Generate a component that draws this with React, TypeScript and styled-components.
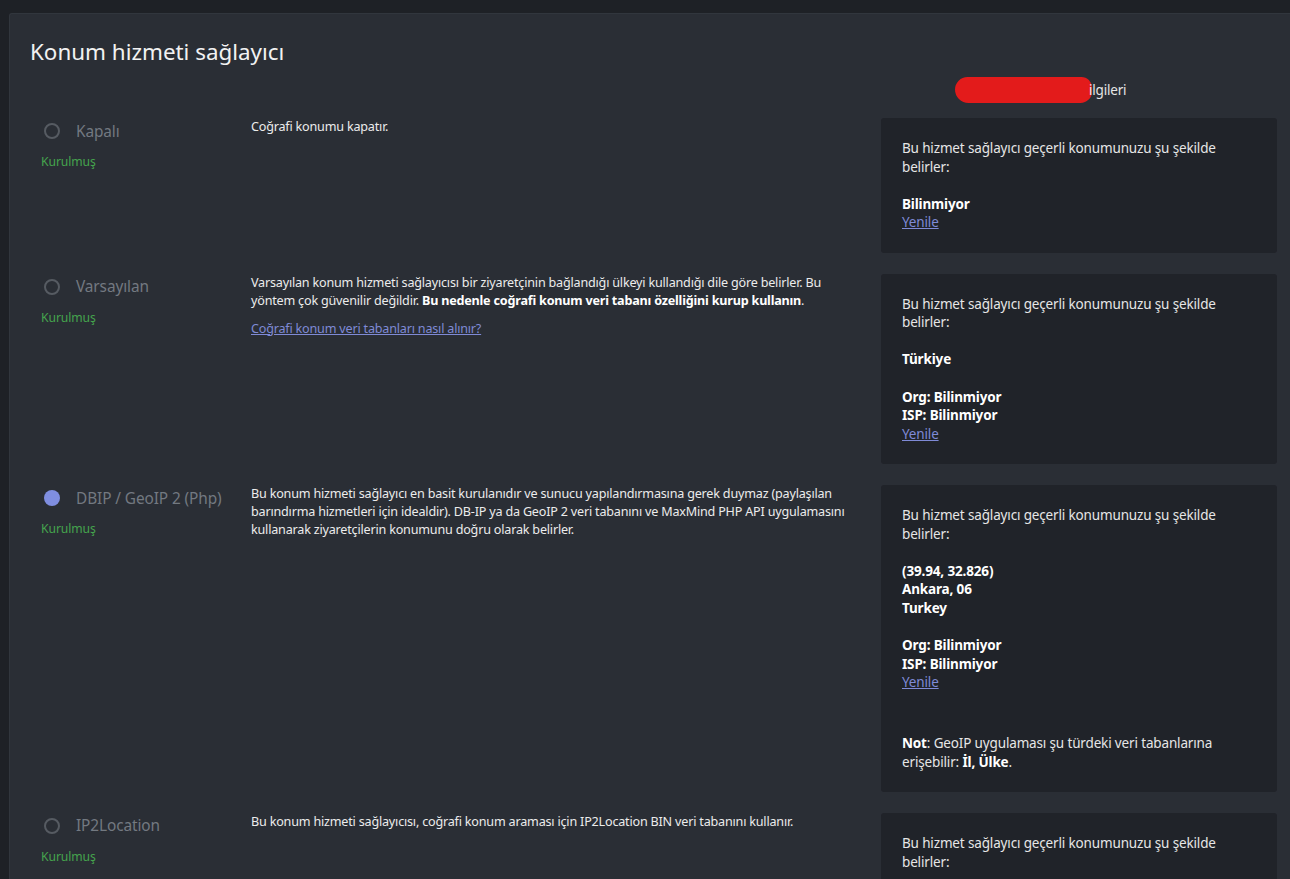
import React from "react";
import styled, { createGlobalStyle } from "styled-components";

const Global = createGlobalStyle`
  html, body { margin: 0; padding: 0; background: #1e2126; }
  body { font-family: "Noto Sans", "Open Sans", sans-serif; overflow: hidden; }
  * { box-sizing: border-box; }
`;

const Page = styled.div`
  padding: 13px 0 0 9px;
  min-height: 879px;
`;

const Panel = styled.section`
  background: #2a2e35;
  border-top: 1px solid #31363d;
  border-left: 1px solid #31363d;
  border-top-left-radius: 3px;
  padding: 22px 13px 40px 20px;
  min-height: 866px;
`;

const Title = styled.h2`
  margin: 0;
  font-size: 22.4px;
  line-height: 32px;
  font-weight: 400;
  color: #f2f2f2;
`;

const HeaderRow = styled.div`
  display: grid;
  grid-template-columns: 1fr 396px;
  margin-top: 9px;
  height: 26px;
`;

const HeaderCell = styled.div`
  grid-column: 2;
  display: flex;
  align-items: center;
  padding-left: 74px;
  font-size: 13.5px;
  letter-spacing: -0.2px;
  color: #e6e6e6;
`;

const Redaction = styled.span`
  display: inline-block;
  width: 137px;
  height: 26px;
  background: #e31b1b;
  border-radius: 13px 11px 12px 14px;
  margin-right: -3px;
`;

const List = styled.div`
  display: flex;
  flex-direction: column;
  gap: 21px;
  margin-top: 15px;
`;

const Row = styled.div`
  display: grid;
  grid-template-columns: 210px minmax(0, 1fr) 396px;
  padding-left: 11px;
  align-items: start;
`;

const OptionCol = styled.div`
  display: flex;
  flex-direction: column;
`;

const RadioLine = styled.label`
  display: flex;
  align-items: center;
  gap: 16px;
  height: 26px;
`;

const Radio = styled.span<{ $checked?: boolean }>`
  width: 16px;
  height: 16px;
  margin-left: 3px;
  border-radius: 50%;
  flex: none;
  border: ${(p) => (p.$checked ? "none" : "2px solid #565b62")};
  background: ${(p) => (p.$checked ? "#7f8ee0" : "transparent")};
`;

const OptionName = styled.span`
  font-size: 15.4px;
  letter-spacing: -0.1px;
  color: #737981;
`;

const Installed = styled.div`
  margin-top: 9px;
  font-size: 12.2px;
  letter-spacing: -0.1px;
  line-height: 18px;
  color: #45a44d;
`;

const Desc = styled.div`
  padding-right: 21px;
  font-size: 12.6px;
  letter-spacing: -0.2px;
  line-height: 18px;
  color: #ececec;
  b { color: #fff; font-weight: 700; }
`;

const DescLink = styled.a`
  display: inline-block;
  margin-top: 10px;
  color: #7f8ad6;
  text-decoration: underline;
`;

const InfoBox = styled.div`
  background: #202329;
  border-radius: 3px;
  padding: 21px 21px 20.7px;
  font-size: 13.5px;
  letter-spacing: -0.15px;
  line-height: 18.6px;
  color: #e6e6e6;
  b { color: #fff; font-weight: 700; }
`;

const Para = styled.p<{ $gap?: number }>`
  margin: ${(p) => p.$gap ?? 0}px 0 0;
`;

const Refresh = styled.a`
  color: #7f8ad6;
  text-decoration: underline;
  display: block;
`;

const Intro = () => (
  <Para>Bu hizmet sağlayıcı geçerli konumunuzu şu şekilde belirler:</Para>
);

type Provider = {
  name: string;
  checked?: boolean;
  desc: React.ReactNode;
  info: React.ReactNode;
};

const providers: Provider[] = [
  {
    name: "Kapalı",
    desc: <>Coğrafi konumu kapatır.</>,
    info: (
      <>
        <Intro />
        <Para $gap={18.6}>
          <b>Bilinmiyor</b>
        </Para>
        <Refresh href="#">Yenile</Refresh>
      </>
    ),
  },
  {
    name: "Varsayılan",
    desc: (
      <>
        Varsayılan konum hizmeti sağlayıcısı bir ziyaretçinin bağlandığı ülkeyi kullandığı dile göre belirler. Bu
        yöntem çok güvenilir değildir. <b>Bu nedenle coğrafi konum veri tabanı özelliğini kurup kullanın</b>.
        <br />
        <DescLink href="#">Coğrafi konum veri tabanları nasıl alınır?</DescLink>
      </>
    ),
    info: (
      <>
        <Intro />
        <Para $gap={18.6}>
          <b>Türkiye</b>
        </Para>
        <Para $gap={18.6}>
          <b>Org: Bilinmiyor</b>
          <br />
          <b>ISP: Bilinmiyor</b>
        </Para>
        <Refresh href="#">Yenile</Refresh>
      </>
    ),
  },
  {
    name: "DBIP / GeoIP 2 (Php)",
    checked: true,
    desc: (
      <>
        Bu konum hizmeti sağlayıcı en basit kurulanıdır ve sunucu yapılandırmasına gerek duymaz (paylaşılan
        barındırma hizmetleri için idealdir). DB-IP ya da GeoIP 2 veri tabanını ve MaxMind PHP API uygulamasını
        kullanarak ziyaretçilerin konumunu doğru olarak belirler.
      </>
    ),
    info: (
      <>
        <Intro />
        <Para $gap={18.6}>
          <b>(39.94, 32.826)</b>
          <br />
          <b>Ankara, 06</b>
          <br />
          <b>Turkey</b>
        </Para>
        <Para $gap={18.6}>
          <b>Org: Bilinmiyor</b>
          <br />
          <b>ISP: Bilinmiyor</b>
        </Para>
        <Refresh href="#">Yenile</Refresh>
        <Para $gap={42}>
          <b>Not</b>: GeoIP uygulaması şu türdeki veri tabanlarına erişebilir: <b>İl, Ülke</b>.
        </Para>
      </>
    ),
  },
  {
    name: "IP2Location",
    desc: <>Bu konum hizmeti sağlayıcısı, coğrafi konum araması için IP2Location BIN veri tabanını kullanır.</>,
    info: (
      <>
        <Intro />
        <Para $gap={18.6}>
          <b>Bilinmiyor</b>
        </Para>
        <Refresh href="#">Yenile</Refresh>
      </>
    ),
  },
];

export default function App() {
  return (
    <Page>
      <Global />
      <Panel>
        <Title>Konum hizmeti sağlayıcı</Title>
        <HeaderRow>
          <HeaderCell>
            <Redaction />
            ilgileri
          </HeaderCell>
        </HeaderRow>
        <List>
          {providers.map((p) => (
            <Row key={p.name}>
              <OptionCol>
                <RadioLine>
                  <Radio $checked={p.checked} />
                  <OptionName>{p.name}</OptionName>
                </RadioLine>
                <Installed>Kurulmuş</Installed>
              </OptionCol>
              <Desc>{p.desc}</Desc>
              <InfoBox>{p.info}</InfoBox>
            </Row>
          ))}
        </List>
      </Panel>
    </Page>
  );
}
